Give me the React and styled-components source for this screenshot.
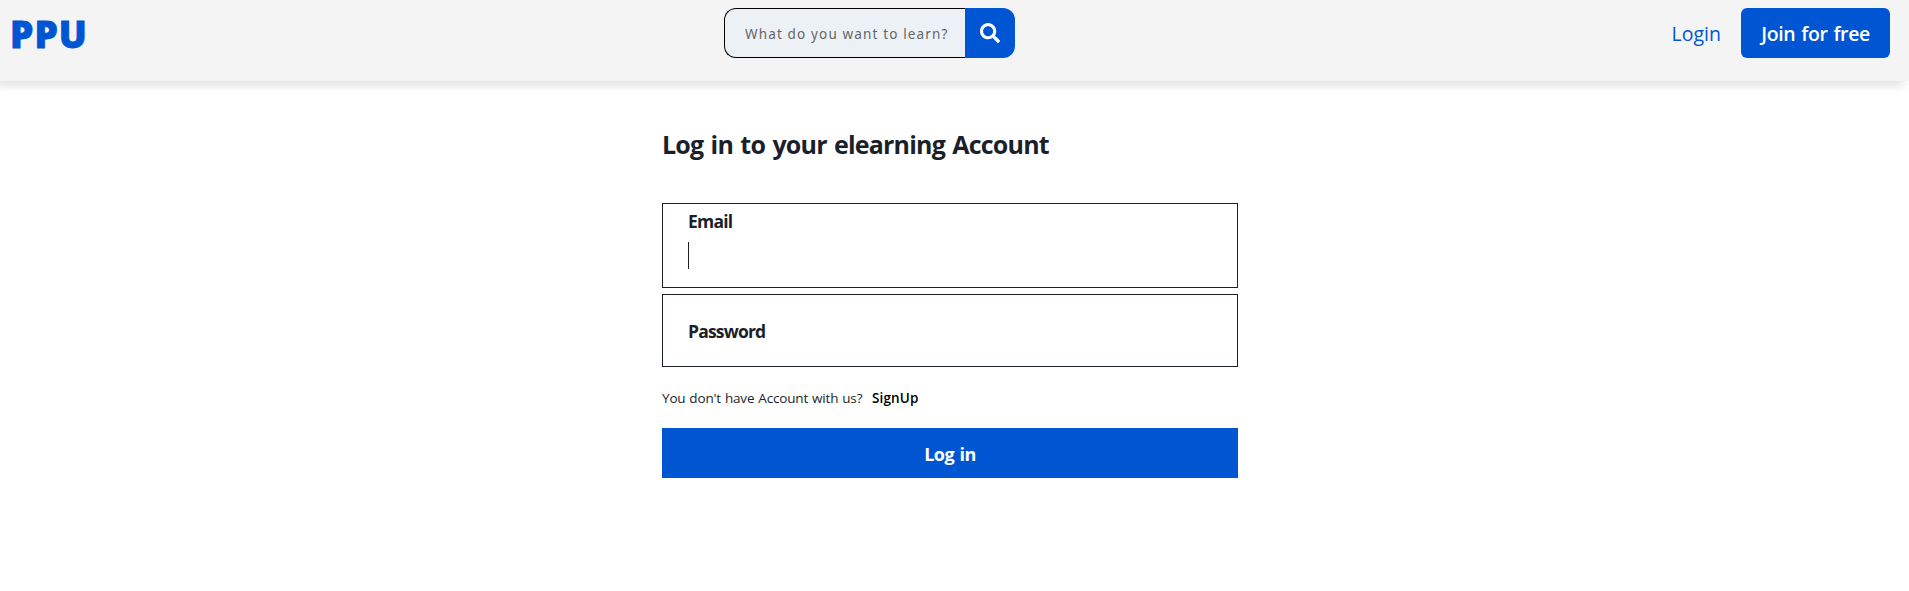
import React from "react";
import styled, { createGlobalStyle } from "styled-components";
import { FaSearch } from "react-icons/fa";

const GlobalStyle = createGlobalStyle`
  *, *::before, *::after { box-sizing: border-box; }
  body {
    margin: 0;
    background: #fff;
    color: #1b1f2b;
    font-family: "Open Sans", "Noto Sans", sans-serif;
    overflow-x: hidden;
  }
`;

const Header = styled.header`
  display: grid;
  grid-template-columns: 1fr auto 1fr;
  align-items: start;
  height: 81px;
  padding: 8px 19px 0 10px;
  background: #f4f4f4;
  box-shadow: -5px 4px 10px rgba(0, 0, 0, 0.13);
`;

const Logo = styled.a`
  justify-self: start;
  color: #0056d2;
  font-family: "Noto Sans", sans-serif;
  font-size: 37px;
  font-weight: 900;
  line-height: 52px;
  letter-spacing: 1px;
  -webkit-text-stroke: 0.8px #0056d2;
`;

const Search = styled.form`
  display: flex;
  width: 291px;
  height: 50px;
  margin-right: 161px;
`;

const SearchInput = styled.input`
  flex: 1;
  min-width: 0;
  padding: 2px 0 0 20px;
  border: 1px solid #000;
  border-right: 0;
  border-radius: 12px 0 0 12px;
  background: #ecf1f6;
  font: 400 13.5px "Noto Sans", sans-serif;
  letter-spacing: 1.15px;
  outline: 0;
  &::placeholder { color: #666; opacity: 1; }
`;

const SearchButton = styled.button`
  display: flex;
  align-items: center;
  justify-content: center;
  width: 50px;
  padding: 0;
  border: 0;
  border-radius: 0 12px 12px 0;
  background: #0056d2;
  color: #fff;
  font-size: 20px;
`;

const Actions = styled.nav`
  display: flex;
  justify-self: end;
  align-items: center;
  gap: 20px;
`;

const LoginLink = styled.a`
  padding-top: 2px;
  color: #0056d2;
  font-size: 19.5px;
  line-height: 48px;
  letter-spacing: 0;
`;

const JoinButton = styled.button`
  width: 149px;
  height: 50px;
  padding: 0;
  border: 0;
  border-radius: 6px;
  background: #0056d2;
  color: #fff;
  font: 600 19.5px "Open Sans", sans-serif;
  letter-spacing: -0.4px;
  word-spacing: 1.4px;
  white-space: nowrap;
`;

const LoginForm = styled.form`
  display: flex;
  flex-direction: column;
  width: 576px;
  margin: 45px 0 0 662px;
`;

const Title = styled.h1`
  margin: 0 0 41px;
  font-size: 25px;
  font-weight: 700;
  line-height: 36px;
  letter-spacing: -0.8px;
  word-spacing: 1.6px;
  white-space: nowrap;
`;

const Field = styled.label`
  display: flex;
  flex-direction: column;
  justify-content: ${(p) => (p.$active ? "flex-start" : "center")};
  height: ${(p) => (p.$active ? 85 : 73)}px;
  padding: ${(p) => (p.$active ? "5px" : "1px")} 25px 0;
  border: 1px solid #1b1f2b;
  & + & { margin-top: 6px; }
`;

const FieldName = styled.span`
  font-size: 17.5px;
  font-weight: 700;
  line-height: 24px;
  letter-spacing: -0.8px;
`;

const Caret = styled.span`
  width: 1px;
  height: 27px;
  margin-top: 9px;
  background: #1b1f2b;
`;

const Prompt = styled.p`
  display: flex;
  gap: 10px;
  margin: 21px 0 0;
  font-size: 13.5px;
  line-height: 20px;
`;

const PromptText = styled.span`
  width: 200px;
  white-space: nowrap;
  letter-spacing: -0.15px;
  word-spacing: 0.5px;
`;

const SignUpLink = styled.a`
  color: #000;
  font-weight: 600;
  letter-spacing: 0.15px;
`;

const SubmitButton = styled.button`
  height: 50px;
  margin-top: 20px;
  padding: 2px 0 0;
  border: 0;
  background: #0056d2;
  color: #fff;
  font: 700 18px "Open Sans", sans-serif;
  letter-spacing: -0.5px;
  word-spacing: 1.2px;
`;

export default function App() {
  return (
    <>
      <GlobalStyle />
      <Header>
        <Logo>PPU</Logo>
        <Search>
          <SearchInput placeholder="What do you want to learn?" />
          <SearchButton type="button" aria-label="Search">
            <FaSearch />
          </SearchButton>
        </Search>
        <Actions>
          <LoginLink>Login</LoginLink>
          <JoinButton type="button">Join for free</JoinButton>
        </Actions>
      </Header>
      <LoginForm>
        <Title>Log in to your elearning Account</Title>
        <Field $active>
          <FieldName>Email</FieldName>
          <Caret />
        </Field>
        <Field>
          <FieldName>Password</FieldName>
        </Field>
        <Prompt>
          <PromptText>You don't have Account with us?</PromptText>
          <SignUpLink>SignUp</SignUpLink>
        </Prompt>
        <SubmitButton type="button">Log in</SubmitButton>
      </LoginForm>
    </>
  );
}
